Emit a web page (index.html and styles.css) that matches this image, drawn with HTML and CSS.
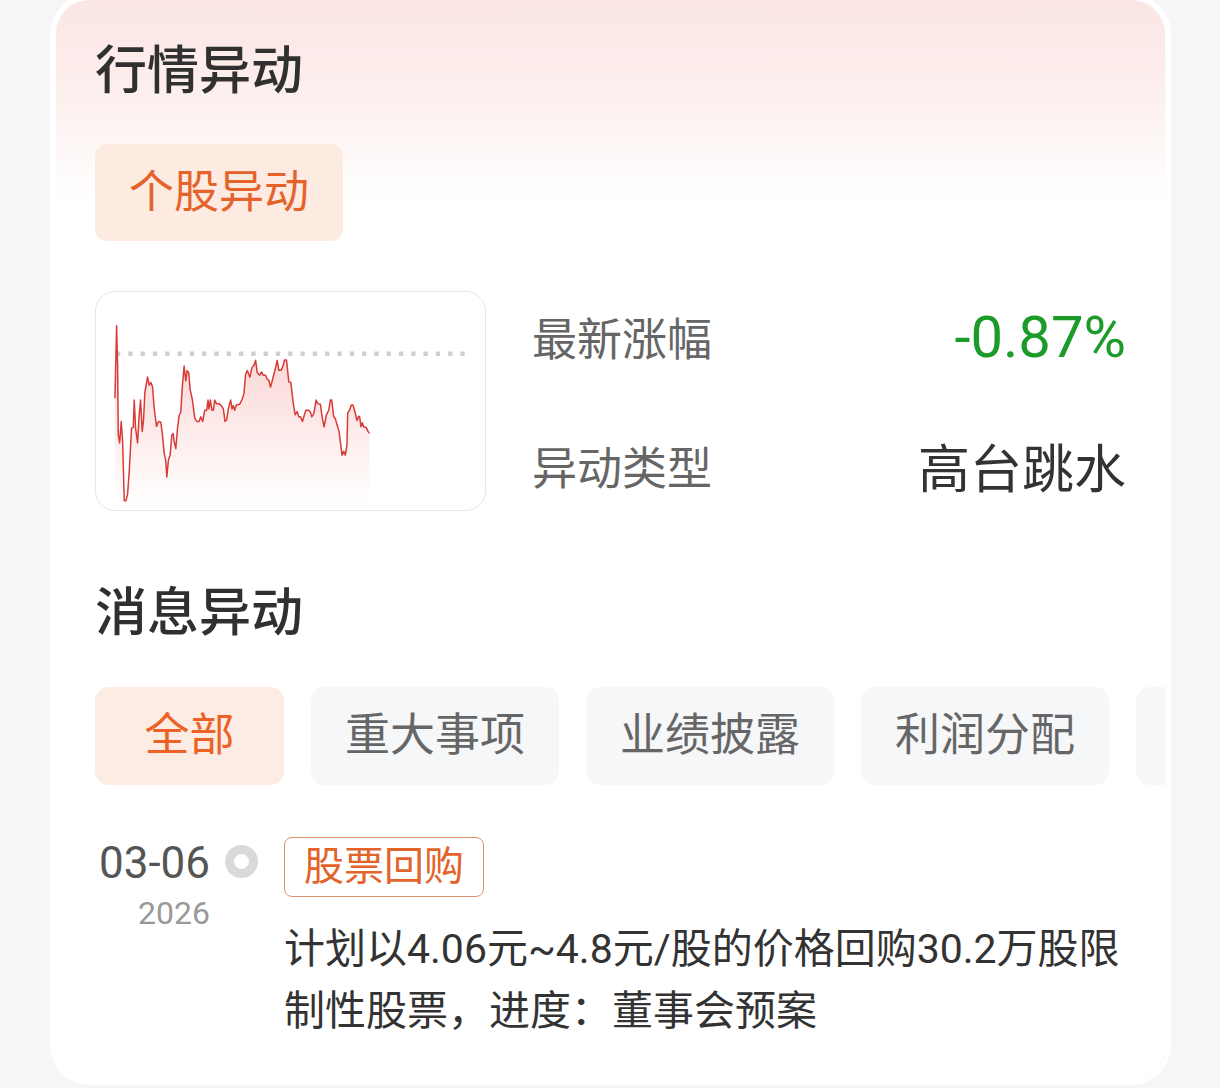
FILE: index.html
```html
<!DOCTYPE html>
<html lang="zh-CN">
<head>
    <meta charset="UTF-8">
    <meta name="viewport" content="width=device-width, initial-scale=1.0">
    <title>行情异动</title>
    <link rel="stylesheet" href="styles.css">
</head>
<body>
    <div class="card">
        <div class="card-inner">
            <h2 class="section-title">行情异动</h2>
            <div class="chip">个股异动</div>

            <div class="quote-row">
                <div class="chart-box">
                    <svg class="chart" viewBox="15 18 1170 660" preserveAspectRatio="none">
                        <defs>
                            <linearGradient id="area" x1="0" y1="0" x2="0" y2="1">
                                <stop offset="0" stop-color="#e8564c" stop-opacity="0.28"/>
                                <stop offset="1" stop-color="#e8564c" stop-opacity="0"/>
                            </linearGradient>
                        </defs>
                        <path class="chart-base" d="M75,205 L1125,205"/>
                        <path class="chart-area" d="M72,340 L77,120 L80,240 L82,450 L86,475 L91,410 L95,470 L100,650 L105,650 L110,630 L115,560 L122,430 L127,428 L130,345 L134,430 L140,475 L145,390 L149,345 L154,440 L158,405 L162,322 L170,275 L175,300 L180,292 L185,305 L190,370 L197,425 L203,410 L210,412 L215,452 L220,505 L225,530 L228,578 L233,525 L238,512 L243,452 L247,446 L250,470 L255,492 L260,432 L265,392 L270,382 L275,300 L280,242 L285,287 L289,256 L294,262 L298,312 L305,345 L312,400 L318,410 L325,410 L330,396 L336,410 L342,376 L348,376 L352,345 L355,372 L359,345 L364,376 L368,376 L372,345 L377,356 L385,356 L392,362 L398,372 L403,410 L408,405 L413,372 L420,345 L424,372 L428,362 L432,376 L437,360 L447,358 L455,342 L460,325 L465,267 L470,256 L478,276 L484,247 L490,240 L495,225 L500,262 L507,270 L513,260 L518,270 L525,270 L530,282 L535,286 L540,306 L545,287 L550,267 L555,247 L560,225 L565,255 L572,255 L578,240 L582,224 L588,224 L595,290 L601,292 L608,352 L614,390 L620,380 L625,396 L630,396 L636,410 L640,396 L646,376 L655,376 L660,382 L664,396 L670,386 L677,345 L682,356 L690,358 L695,396 L701,426 L708,390 L715,376 L720,345 L724,345 L730,396 L735,402 L740,420 L746,440 L750,472 L755,512 L760,500 L765,512 L770,480 L772,385 L778,375 L783,360 L788,360 L795,385 L800,407 L805,394 L808,396 L812,426 L816,414 L820,426 L828,428 L833,440 L838,446 L838,660 L72,660 Z"/>
                        <path class="chart-line" d="M72,340 L77,120 L80,240 L82,450 L86,475 L91,410 L95,470 L100,650 L105,650 L110,630 L115,560 L122,430 L127,428 L130,345 L134,430 L140,475 L145,390 L149,345 L154,440 L158,405 L162,322 L170,275 L175,300 L180,292 L185,305 L190,370 L197,425 L203,410 L210,412 L215,452 L220,505 L225,530 L228,578 L233,525 L238,512 L243,452 L247,446 L250,470 L255,492 L260,432 L265,392 L270,382 L275,300 L280,242 L285,287 L289,256 L294,262 L298,312 L305,345 L312,400 L318,410 L325,410 L330,396 L336,410 L342,376 L348,376 L352,345 L355,372 L359,345 L364,376 L368,376 L372,345 L377,356 L385,356 L392,362 L398,372 L403,410 L408,405 L413,372 L420,345 L424,372 L428,362 L432,376 L437,360 L447,358 L455,342 L460,325 L465,267 L470,256 L478,276 L484,247 L490,240 L495,225 L500,262 L507,270 L513,260 L518,270 L525,270 L530,282 L535,286 L540,306 L545,287 L550,267 L555,247 L560,225 L565,255 L572,255 L578,240 L582,224 L588,224 L595,290 L601,292 L608,352 L614,390 L620,380 L625,396 L630,396 L636,410 L640,396 L646,376 L655,376 L660,382 L664,396 L670,386 L677,345 L682,356 L690,358 L695,396 L701,426 L708,390 L715,376 L720,345 L724,345 L730,396 L735,402 L740,420 L746,440 L750,472 L755,512 L760,500 L765,512 L770,480 L772,385 L778,375 L783,360 L788,360 L795,385 L800,407 L805,394 L808,396 L812,426 L816,414 L820,426 L828,428 L833,440 L838,446"/>
                    </svg>
                </div>
                <div class="stats">
                    <div class="stat">
                        <span class="stat-label">最新涨幅</span>
                        <span class="stat-value down">-0.87%</span>
                    </div>
                    <div class="stat">
                        <span class="stat-label">异动类型</span>
                        <span class="stat-value type">高台跳水</span>
                    </div>
                </div>
            </div>

            <h2 class="section-title news-title">消息异动</h2>
            <ul class="tabs">
                <li class="tab active">全部</li>
                <li class="tab">重大事项</li>
                <li class="tab">业绩披露</li>
                <li class="tab">利润分配</li>
                <li class="tab tab-more"></li>
            </ul>

            <div class="event">
                <div class="event-date">
                    <div class="event-day">03-06</div>
                    <div class="event-year">2026</div>
                </div>
                <div class="event-dot"></div>
                <div class="event-body">
                    <span class="event-tag">股票回购</span>
                    <p class="event-text">计划以4.06元~4.8元/股的价格回购30.2万股限制性股票，进度：董事会预案</p>
                </div>
            </div>
        </div>
    </div>
</body>
</html>
```

FILE: styles.css
```css
/* reset */
html, body {
    height: 100%;
    margin: 0;
}
body, ul, li, h2, p {
    margin: 0;
    padding: 0;
}
ul {
    list-style: none;
}
body {
    background: #f6f6f8;
    font-family: Roboto, "Noto Sans CJK SC", sans-serif;
    color: #333;
    overflow: hidden;
}

.card {
    margin: -6px 49px 0 50px;
    padding: 6px;
    background: #fff;
    border-radius: 40px;
}
.card-inner {
    padding: 43px 39px 37px;
    border-radius: 34px;
    overflow: hidden;
    background: linear-gradient(180deg, #fbe5e5 0, #fcefed 90px, #fff 200px);
    box-shadow: 0 0 2px rgba(0, 0, 0, 0.05);
}

.section-title {
    font-size: 52px;
    line-height: 57px;
    font-weight: 500;
    color: #303030;
}
.news-title {
    margin-top: 74px;
    line-height: 58px;
}

.chip {
    display: inline-block;
    margin-top: 44px;
    padding: 0 34px;
    height: 97px;
    line-height: 97px;
    font-size: 45px;
    color: #e5622a;
    background: #fdebe2;
    border-radius: 12px;
}

/* 分时图 + 数据 */
.quote-row {
    display: flex;
    margin-top: 50px;
    height: 220px;
}
.chart-box {
    width: 391px;
    flex-shrink: 0;
    box-sizing: border-box;
    border: 1px solid #e6e6e6;
    border-radius: 20px;
    overflow: hidden;
}
.chart {
    display: block;
    width: 100%;
    height: 100%;
}
.chart-base {
    fill: none;
    stroke: #cfcfcf;
    stroke-width: 13;
    stroke-dasharray: 13 24;
}
.chart-area {
    fill: url(#area);
}
.chart-line {
    fill: none;
    stroke: #d83a38;
    stroke-width: 4.5;
    stroke-linejoin: round;
}

.stats {
    flex: 1;
    padding-left: 46px;
    display: flex;
    flex-direction: column;
    justify-content: center;
    gap: 65px;
}
.stat {
    display: flex;
    justify-content: space-between;
    align-items: center;
    height: 64px;
}
.stat-label {
    font-size: 45px;
    color: #666;
}
.stat-value.down {
    font-size: 58px;
    color: #1c9b2a;
}
.stat-value.type {
    font-size: 52px;
    color: #333;
}

/* tabs */
.tabs {
    display: flex;
    gap: 27px;
    margin-top: 44px;
    margin-right: -39px;
    overflow: hidden;
}
.tab {
    flex-shrink: 0;
    min-width: 189px;
    box-sizing: border-box;
    padding: 0 34px;
    height: 98px;
    line-height: 98px;
    text-align: center;
    font-size: 45px;
    color: #666;
    background: #f6f7f9;
    border-radius: 14px;
}
.tab.active {
    color: #ec6226;
    background: #fdece4;
}

/* 消息列表 */
.event {
    display: flex;
    margin-top: 52px;
}
.event-date {
    width: 115px;
    flex-shrink: 0;
    text-align: right;
}
.event-day {
    font-size: 44px;
    line-height: 52px;
    color: #555;
}
.event-year {
    font-size: 32px;
    line-height: 48px;
    color: #999;
}
.event-dot {
    flex-shrink: 0;
    width: 33px;
    height: 33px;
    box-sizing: border-box;
    margin: 8px 26px 0 15px;
    border: 9px solid #d9d9d9;
    border-radius: 50%;
}
.event-body {
    flex: 1;
}
.event-tag {
    display: inline-block;
    padding: 0 19px;
    height: 58px;
    line-height: 58px;
    font-size: 40px;
    color: #e2642a;
    border: 1.5px solid #e39070;
    border-radius: 8px;
}
.event-text {
    margin-top: 21px;
    font-size: 41px;
    line-height: 62px;
    color: #333;
}
```
